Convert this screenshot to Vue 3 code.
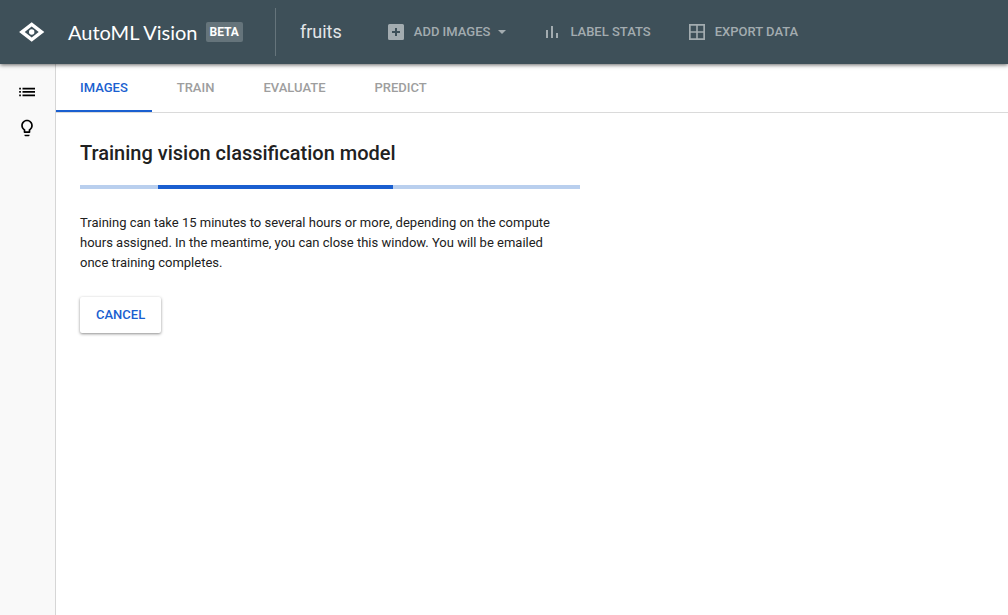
<script setup>
import { ref } from 'vue'

const tabs = ['Images', 'Train', 'Evaluate', 'Predict']
const active = ref('Images')
</script>

<template>
  <div class="app">
    <header class="topbar">
      <svg class="logo" width="26" height="20" viewBox="0 0 26 20" aria-hidden="true">
        <path fill="#fff" fill-rule="evenodd" d="M12.700 0.300 25.300 10 12.700 19.700 0.100 10ZM12.700 4.600 5.700 10 12.700 15.400 19.700 10Z" />
        <circle cx="12.700" cy="10" r="2.700" fill="#fff" />
      </svg>
      <div class="product">AutoML Vision</div>
      <span class="beta">BETA</span>
      <div class="dataset">fruits</div>
      <nav class="actions" aria-label="Dataset actions">
        <button class="action" type="button">
          <svg width="20" height="20" viewBox="0 0 20 20" aria-hidden="true">
            <path fill="currentColor" fill-rule="evenodd" d="M3.500 2h13A1.500 1.500 0 0 1 18 3.500v13a1.500 1.500 0 0 1-1.500 1.500h-13A1.500 1.500 0 0 1 2 16.500v-13A1.500 1.500 0 0 1 3.500 2zM9 6v3H6v2h3v3h2v-3h3V9h-3V6z" />
          </svg>
          <span>ADD IMAGES</span>
          <svg class="caret" width="8" height="4" viewBox="0 0 8 4" aria-hidden="true">
            <path fill="currentColor" d="M0 0h8L4 4z" />
          </svg>
        </button>
        <button class="action" type="button">
          <svg width="20" height="20" viewBox="0 0 20 20" aria-hidden="true">
            <path fill="currentColor" d="M4 8h2v8H4zM9 4h2v12H9zM14 11h2v5h-2z" />
          </svg>
          <span>LABEL STATS</span>
        </button>
        <button class="action" type="button">
          <svg width="20" height="20" viewBox="0 0 20 20" aria-hidden="true">
            <path fill="currentColor" fill-rule="evenodd" d="M2 2h16v16H2zM3.700 3.700v5.500h5.500V3.700zm7.100 0v5.500h5.500V3.700zM3.700 10.800v5.500h5.500v-5.500zm7.100 0v5.500h5.500v-5.500z" />
          </svg>
          <span>EXPORT DATA</span>
        </button>
      </nav>
    </header>

    <div class="body">
      <aside class="rail">
        <button type="button" aria-label="Datasets">
          <svg width="20" height="20" viewBox="0 0 20 20" aria-hidden="true">
            <path d="M2.200 5.700h1.700v1.700H2.200zm0 3.400h1.700v1.700H2.200zm0 3.400h1.700v1.700H2.200zM5.500 5.700H18v1.700H5.500zm0 3.400H18v1.700H5.500zm0 3.400H18v1.700H5.500z" />
          </svg>
        </button>
        <button type="button" aria-label="Models">
          <svg width="20" height="20" viewBox="0 0 24 24" aria-hidden="true">
            <path d="M9 21c0 .55.45 1 1 1h4c.55 0 1-.45 1-1v-1H9v1zm3-19C8.140 2 5 5.140 5 9c0 2.380 1.190 4.470 3 5.740V17c0 .55.45 1 1 1h6c.55 0 1-.45 1-1v-2.260c1.810-1.270 3-3.360 3-5.740 0-3.860-3.140-7-7-7zm2.850 11.100-.85.6V16h-4v-2.300l-.85-.6A5 5 0 1 1 14.850 13.100z" />
          </svg>
        </button>
      </aside>

      <main class="main">
        <div class="tabs" role="tablist">
          <button
            v-for="tab in tabs"
            :key="tab"
            class="tab"
            :class="{ active: tab === active }"
            type="button"
            role="tab"
            :aria-selected="tab === active"
            @click="active = tab"
          >{{ tab.toUpperCase() }}</button>
        </div>

        <section class="panel">
          <h1>Training vision classification model</h1>
          <div class="progress" role="progressbar" aria-label="Training progress">
            <div class="progress-bar"></div>
          </div>
          <p>
            Training can take 15 minutes to several hours or more, depending on the compute<br />
            hours assigned. In the meantime, you can close this window. You will be emailed<br />
            once training completes.
          </p>
          <button class="cancel" type="button">CANCEL</button>
        </section>
      </main>
    </div>
  </div>
</template>

<style>
body {
  margin: 0;
}
</style>

<style scoped>
.app {
  display: flex;
  flex-direction: column;
  min-height: 100vh;
  background: #fff;
  color: #212121;
  font-family: Roboto, "Liberation Sans", sans-serif;
  font-size: 13px;
}

button {
  margin: 0;
  padding: 0;
  border: 0;
  background: none;
  font: inherit;
  font-weight: 500;
  cursor: pointer;
}

svg {
  display: block;
  flex: none;
}

.topbar {
  z-index: 1;
  display: flex;
  align-items: center;
  height: 64px;
  padding-left: 19px;
  background: #3e5059;
  box-shadow: 0 1px 4px rgba(0, 0, 0, 0.6);
  white-space: nowrap;
}

.product {
  margin-left: 23px;
  color: #fff;
  font-family: Lato, Roboto, sans-serif;
  font-size: 20px;
  line-height: 24px;
}

.beta {
  margin-left: 8px;
  padding: 0 4px;
  border-radius: 2px;
  background: #65747b;
  color: #fff;
  font-size: 12px;
  font-weight: 700;
  line-height: 20px;
}

.dataset {
  margin-left: 32px;
  padding-left: 24px;
  border-left: 1px solid #65747b;
  color: #e3e6e8;
  font-size: 18px;
  line-height: 48px;
}

.actions {
  display: flex;
  gap: 36px;
  margin-left: 44px;
}

.action {
  display: flex;
  align-items: center;
  gap: 8px;
  color: #a3acb0;
  line-height: 20px;
}

.body {
  display: flex;
  flex: 1;
}

.rail {
  display: flex;
  flex-direction: column;
  align-items: center;
  gap: 16px;
  width: 54px;
  padding: 18px 1px 0 0;
  border-right: 1px solid #d6d6d6;
  background: #f9f9f9;
}

.main {
  flex: 1;
  min-width: 0;
}

.tabs {
  display: flex;
  gap: 1px;
  height: 48px;
  border-bottom: 1px solid #dadada;
}

.tab {
  padding: 0 24px;
  border-bottom: 2px solid transparent;
  color: #9e9e9e;
}

.tab.active {
  border-bottom-color: #1a5fd0;
  color: #1a5fd0;
}

.panel {
  max-width: 500px;
  padding: 28px 24px;
}

h1 {
  margin: 0;
  font-size: 20px;
  font-weight: 500;
  line-height: 24px;
}

.progress {
  height: 4px;
  margin-top: 20px;
  background: #b9cfee;
}

.progress-bar {
  width: 47%;
  height: 100%;
  margin-left: 15.6%;
  background: #1a5fd0;
}

p {
  margin: 24px 0;
  line-height: 20px;
  white-space: nowrap;
}

.cancel {
  padding: 0 16px;
  border-radius: 2px;
  background: #fff;
  box-shadow: 0 1px 3px rgba(0, 0, 0, 0.45);
  color: #1a5fd0;
  line-height: 36px;
}
</style>
